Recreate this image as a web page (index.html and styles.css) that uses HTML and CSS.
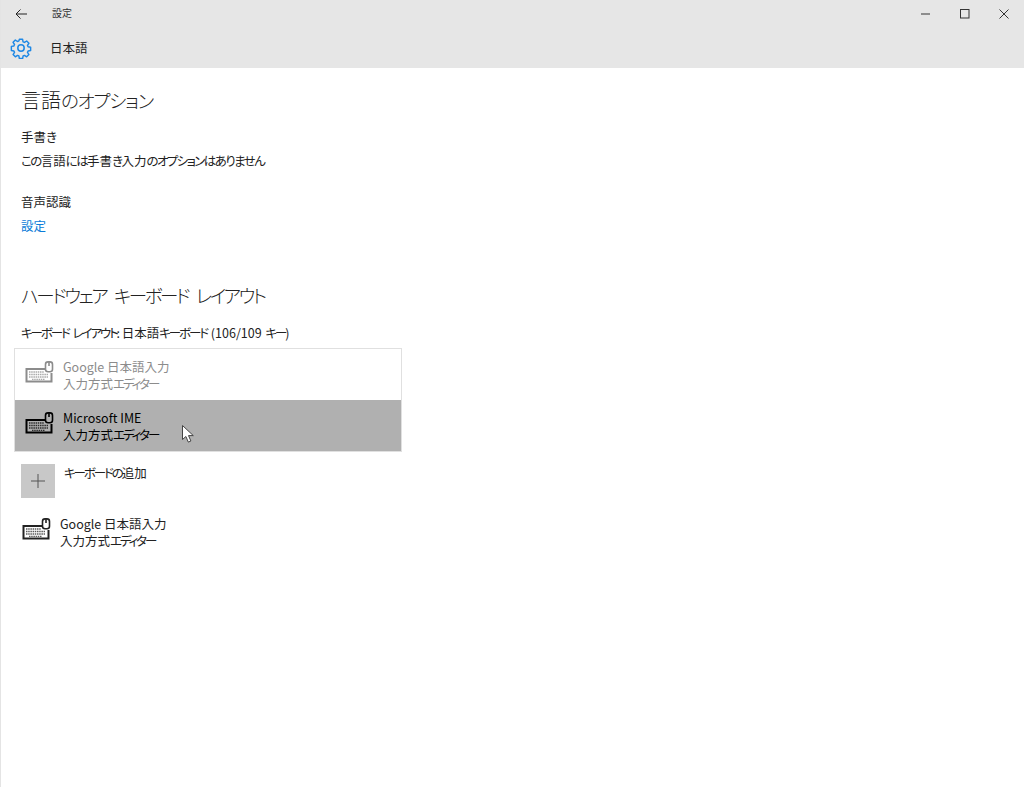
FILE: index.html
```html
<!DOCTYPE html>
<html lang="ja">
<head>
<meta charset="utf-8">
<title>設定</title>
<link rel="stylesheet" href="styles.css">
</head>
<body>
<div class="window">
  <header class="chrome">
    <div class="titlebar">
      <svg class="back" width="12" height="10" viewBox="0 0 12 10"><path d="M5.500 .5 1 5l4.500 4.500M1 5h11" fill="none" stroke="#222" stroke-width="1"/></svg>
      <span class="apptitle">設定</span>
      <div class="winbtns">
        <svg width="10" height="10" viewBox="0 0 10 10"><path d="M0 5h9" stroke="#666" stroke-width="1.400"/></svg>
        <svg width="10" height="10" viewBox="0 0 10 10"><rect x=".5" y=".5" width="8.500" height="8.500" fill="none" stroke="#333" stroke-width="1"/></svg>
        <svg width="10" height="10" viewBox="0 0 10 10"><path d="M.5 .5l9 9M9.500 .5l-9 9" stroke="#333" stroke-width="1"/></svg>
      </div>
    </div>
    <div class="pagebar">
      <svg class="gear" width="22" height="22" viewBox="0 0 22 22"><path d="M9.200 1.300h3.600l.5 2.800 1.600.7 2.400-1.600 2.500 2.500-1.600 2.400.7 1.600 2.800.5v3.600l-2.800.5-.7 1.600 1.600 2.400-2.500 2.500-2.400-1.600-1.600.7-.5 2.800H9.200l-.5-2.800-1.600-.7-2.400 1.600-2.500-2.500 1.600-2.400-.7-1.600-2.800-.5V9.200l2.800-.5.7-1.600-1.600-2.400 2.500-2.500 2.400 1.600 1.600-.7z" transform="translate(1.100 1.100) scale(.9)" fill="none" stroke="#1e88e5" stroke-width="1.600" stroke-linejoin="round"/><circle cx="11" cy="11" r="3.200" fill="none" stroke="#1e88e5" stroke-width="1.500"/></svg>
      <span class="pagetitle">日本語</span>
    </div>
  </header>
  <main class="content">
    <h2 class="heading first">言語<span class="hk">のオプション</span></h2>
    <h3 class="label handwrite">手書<span class="k">き</span></h3>
    <p class="text note"><span class="k">この</span>言語<span class="k">には</span>手書<span class="k">き</span>入力<span class="k">のオプションはありません</span></p>
    <h3 class="label speech">音声認識</h3>
    <a class="link">設定</a>
    <h2 class="heading hw"><span class="hk wide">ハードウェア キーボード レイアウト</span></h2>
    <p class="text layout"><span class="kt">キーボード レイアウト:</span> 日本語<span class="kt">キーボード</span> (106/109 <span class="kt">キー</span>)</p>
    <div class="dropdown">
      <div class="option dim">
        <svg class="kb" width="30" height="28" viewBox="0 0 30 28"><use href="#kbd"/></svg>
        <div class="opttext"><span class="l1">Google 日本語入力</span><span>入力方式<span class="kt">エディター</span></span></div>
      </div>
      <div class="option selected">
        <svg class="kb" width="30" height="28" viewBox="0 0 30 28"><use href="#kbd"/></svg>
        <div class="opttext"><span class="l1">Microsoft IME</span><span>入力方式<span class="kt">エディター</span></span></div>
        <svg class="cursor" width="12" height="18" viewBox="0 0 12 18"><path d="M.5.5v14l3.400-3 2.400 5.600 2.600-1.100-2.400-5.400h4.800z" fill="#fff" stroke="#444" stroke-width="1"/></svg>
      </div>
    </div>
    <div class="add">
      <div class="plus"><svg width="14" height="14" viewBox="0 0 14 14"><path d="M7 0v14M0 7h14" stroke="#555" stroke-width="1"/></svg></div>
      <span class="addlabel"><span class="kt">キーボードの</span>追加</span>
    </div>
    <div class="installed">
      <svg class="kb" width="30" height="28" viewBox="0 0 30 28"><use href="#kbd"/></svg>
      <div class="opttext"><span class="l1">Google 日本語入力</span><span>入力方式<span class="kt">エディター</span></span></div>
    </div>
  </main>
</div>
<svg class="defs" width="0" height="0">
  <defs>
    <g id="kbd">
      <path d="M20 8H1.500v12.500h25V12" fill="none" stroke="currentColor" stroke-width="2"/>
      <path d="M23 .9h2c1.400 0 2.500 1.100 2.500 2.500v4.800c0 1.400-1.100 2.500-2.500 2.500h-2c-1.400 0-2.500-1.100-2.500-2.500V3.400C20.500 2 21.600 .9 23 .9zM24 1v4" fill="none" stroke="currentColor" stroke-width="1.600"/>
      <path d="M4 11h15M4 13.500h19M4 16h19M7 18.300h13" stroke="currentColor" stroke-width="1.300" stroke-dasharray="1.500 .7" fill="none" opacity=".75"/>
    </g>
  </defs>
</svg>
</body>
</html>
```
FILE: styles.css
```css
* { box-sizing: border-box; }
html, body { margin: 0; height: 100%; }
body {
  background: #fff;
  color: #222;
  font-family: "Noto Sans CJK JP", "Noto Sans", sans-serif;
  font-feature-settings: "palt";
  font-size: 12.5px;
  overflow: hidden;
}
.k { letter-spacing: -1.600px; }
.kt { letter-spacing: -2.100px; word-spacing: 3px; }
.hk { font-size: 18.500px; letter-spacing: -1.200px; }
.hk.wide { letter-spacing: -2.400px; word-spacing: 6px; }
.window { height: 787px; border-left: 1px solid #e4e4e4; }
.defs { position: absolute; }
.chrome { background: #e6e6e6; height: 68px; }
.titlebar { display: flex; align-items: center; height: 28px; padding-left: 14px; }
.back { flex: none; margin-bottom: 1px; }
.apptitle { margin: 0 0 3px 25px; font-size: 10px; color: #333; }
.winbtns { margin-left: auto; display: flex; gap: 29px; padding-right: 15px; align-items: center; }
.pagebar { display: flex; align-items: center; height: 40px; padding-left: 9px; }
.pagetitle { margin: 0 0 2px 18px; }
.content { padding-left: 20px; }
.heading { margin: 0; font-size: 20px; font-weight: 300; line-height: 28px; color: #222; }
.first { margin-top: 18px; }
.label { margin: 0; font-size: 12.500px; font-weight: 400; line-height: 18px; }
.handwrite { margin-top: 14px; }
.text { margin: 0; line-height: 18px; }
.note { margin-top: 6px; }
.speech { margin-top: 23px; }
.link { display: block; margin-top: 6px; line-height: 18px; color: #0a7bd8; }
.hw { margin-top: 46px; }
.layout { margin-top: 15px; word-spacing: 1px; }
.dropdown {
  width: 388px; height: 104px; margin: 6px 0 0 -7px;
  border: 1px solid #e0e0e0; background: #fff;
}
.option { display: flex; align-items: center; position: relative; height: 51px; padding-left: 10px; }
.option.dim { color: #8c8c8c; }
.option.selected { background: #b0b0b0; color: #000; }
.opttext { display: flex; flex-direction: column; margin-left: 8px; line-height: 17px; }
.kb { flex: none; }
.cursor { position: absolute; left: 167px; top: 25px; }
.add { display: flex; align-items: flex-start; margin-top: 12px; }
.plus { width: 34px; height: 34px; background: #c8c8c8; display: flex; align-items: center; justify-content: center; }
.addlabel { margin-left: 9px; line-height: 18px; }
.installed { display: flex; align-items: center; margin-top: 17px; padding-left: 1px; }
.installed .opttext { margin-left: 8px; }
```
